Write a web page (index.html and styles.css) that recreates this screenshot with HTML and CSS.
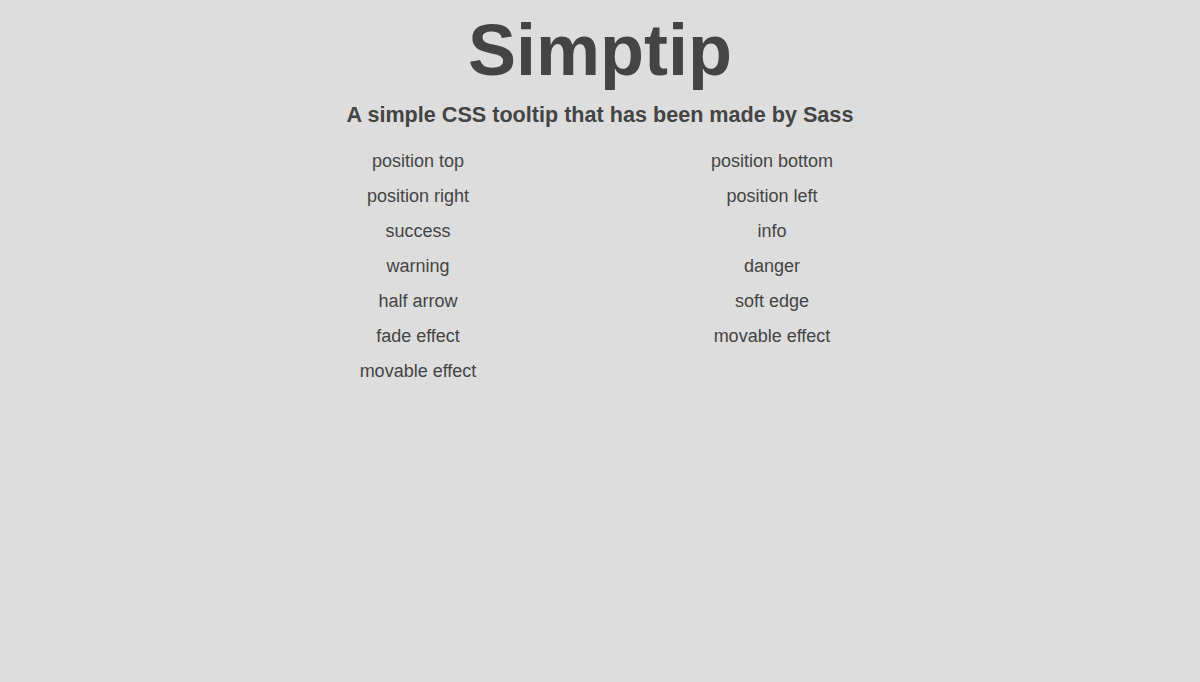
FILE: index.html
```html
<!DOCTYPE html>
<html lang="en">
<head>
    <meta charset="UTF-8">
    <title>Simptip</title>
    <link rel="stylesheet" href="styles.css">
</head>
<body>

<div class="header">
    <h1>Simptip</h1>
    <h2>A simple CSS tooltip that has been made by Sass</h2>
</div>

<div class="demos">
    <ul class="demo-list">
        <li><span class="tip">position top</span></li>
        <li><span class="tip">position right</span></li>
        <li><span class="tip">success</span></li>
        <li><span class="tip">warning</span></li>
        <li><span class="tip">half arrow</span></li>
        <li><span class="tip">fade effect</span></li>
        <li><span class="tip">movable effect</span></li>
    </ul>
    <ul class="demo-list">
        <li><span class="tip">position bottom</span></li>
        <li><span class="tip">position left</span></li>
        <li><span class="tip">info</span></li>
        <li><span class="tip">danger</span></li>
        <li><span class="tip">soft edge</span></li>
        <li><span class="tip">movable effect</span></li>
    </ul>
</div>

</body>
</html>
```

FILE: styles.css
```css
body {
    font-family: 'Liberation Sans', Arial, sans-serif;
    background-color: #ddd;
    color: #444;
    margin: 0;
    padding: 0;
}
.header {
    text-align: center;
}
h1 {
    font-size: 72px;
    font-weight: bold;
    line-height: 1;
    margin: 0;
    padding-top: 14px;
}
h2 {
    font-size: 21.6px;
    font-weight: bold;
    margin: 16px 0 16px;
    line-height: 1.2;
}
.demos {
    display: grid;
    grid-template-columns: 1fr 1fr;
    max-width: 708px;
    margin: 0 auto;
    padding-right: 10px;
    text-align: center;
}
.demo-list {
    list-style: none;
    margin: 0;
    padding: 0;
}
.demo-list li {
    font-size: 18px;
    line-height: 35px;
}
.tip {
    cursor: pointer;
}
```
